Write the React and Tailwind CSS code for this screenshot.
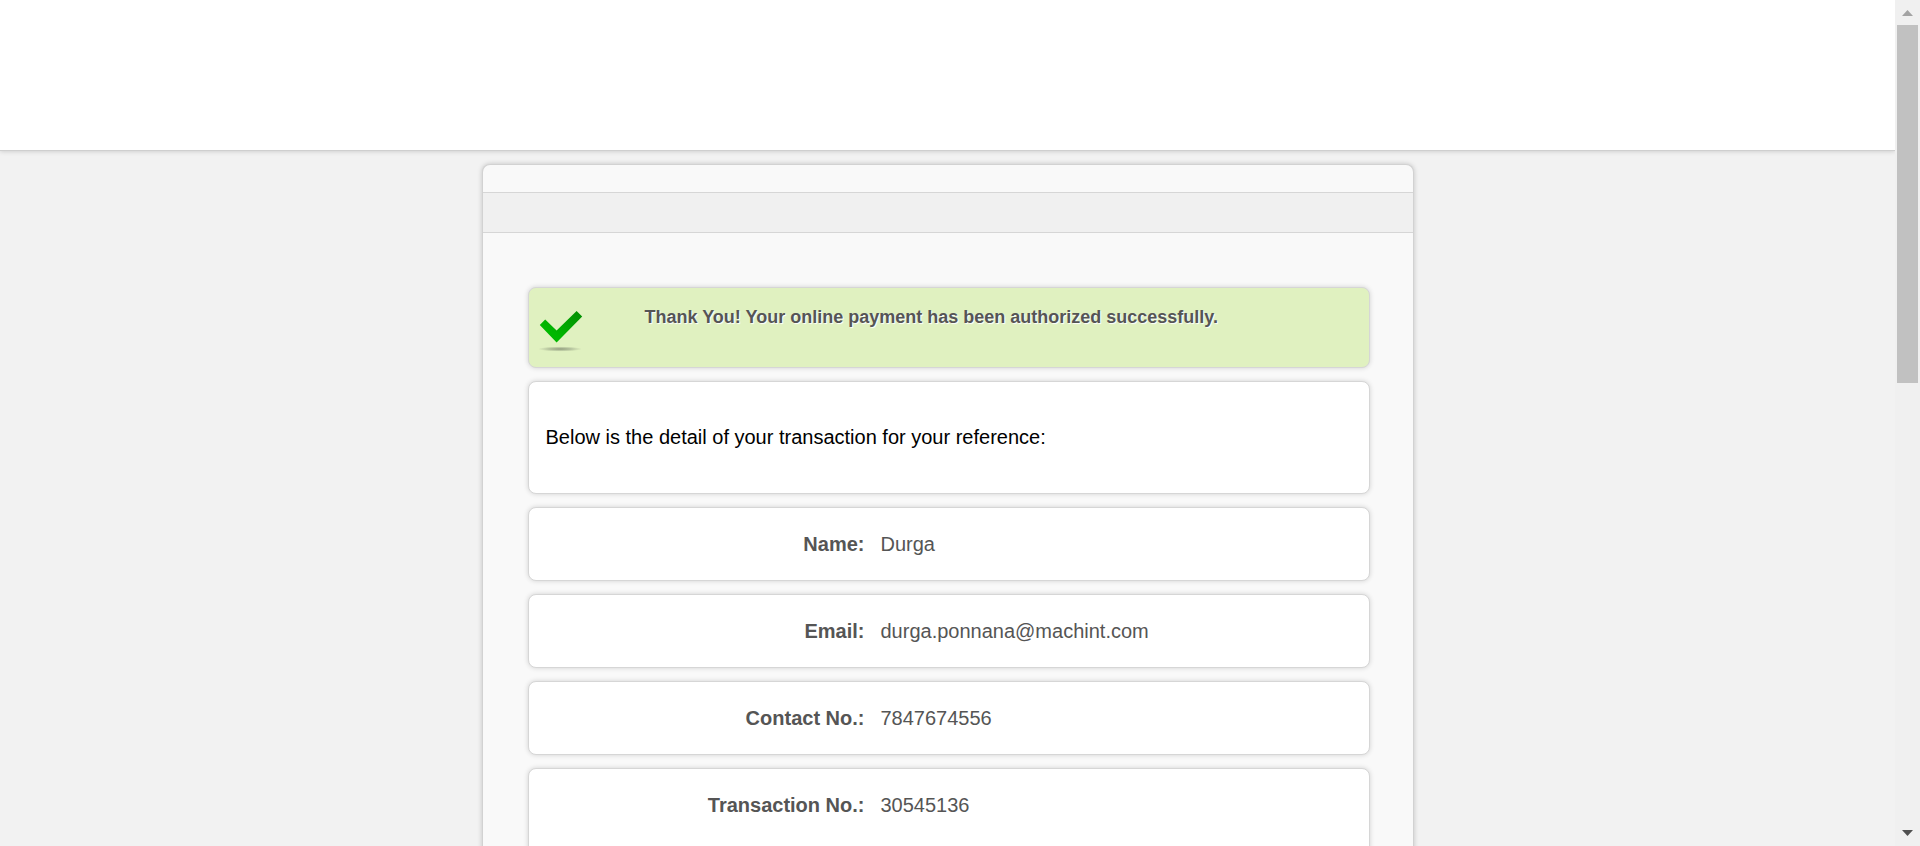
const details = [
  ['Name:', 'Durga'],
  ['Email:', 'durga.ponnana@machint.com'],
  ['Contact No.:', '7847674556'],
  ['Transaction No.:', '30545136'],
];

const panel =
  'rounded-lg border border-[#d6d6d6] shadow-[0_0_5px_rgba(0,0,0,0.16)]';

function SuccessIcon() {
  return (
    <svg viewBox="0 0 44 42" className="h-[42px] w-11 shrink-0" aria-hidden="true">
      <defs>
        <linearGradient id="tick" x1="0" y1="1" x2="1" y2="0">
          <stop offset="0.3" stopColor="#00b800" />
          <stop offset="1" stopColor="#048c04" />
        </linearGradient>
        <radialGradient id="ground">
          <stop offset="0" stopColor="#7c866a" stopOpacity="0.8" />
          <stop offset="0.5" stopColor="#89947a" stopOpacity="0.5" />
          <stop offset="1" stopColor="#8f9a7c" stopOpacity="0" />
        </radialGradient>
      </defs>
      <ellipse cx="21" cy="38" rx="22" ry="2.6" fill="url(#ground)" />
      <path d="M.8 14 6.2 8.6 17.6 19.6 37.6 0 43.2 5.6 17.6 31.6Z" fill="url(#tick)" />
    </svg>
  );
}

function ScrollTrack() {
  return (
    <div className="flex w-[25px] shrink-0 flex-col items-center bg-[#f0f0f0]" aria-hidden="true">
      <div className="flex h-[25px] w-full shrink-0 items-center justify-center">
        <svg viewBox="0 0 11 6" className="h-1.5 w-[11px]">
          <path d="M0 6 5.5 0 11 6Z" fill="#a3a3a3" />
        </svg>
      </div>
      <div className="flex w-full flex-1 flex-col px-0.5">
        <div className="h-[45%] bg-[#c1c1c1]" />
      </div>
      <div className="flex h-[26px] w-full shrink-0 items-center justify-center">
        <svg viewBox="0 0 11 6" className="h-1.5 w-[11px]">
          <path d="M0 0h11L5.5 6Z" fill="#505050" />
        </svg>
      </div>
    </div>
  );
}

export default function App() {
  return (
    <div className="flex h-screen overflow-hidden bg-[#f2f2f2] font-['Liberation_Sans',Arial,sans-serif] text-[#555]">
      <div className="min-w-0 flex-1 overflow-hidden">
        <header className="h-[151px] border-b border-[#cfcfcf] bg-white shadow-[0_0_5px_rgba(0,0,0,0.2)]" />
        <main className="mx-auto mt-[13px] w-full max-w-[932px] rounded-t-lg border border-b-0 border-[#d2d2d2] bg-[#f9f9f9] shadow-[0_0_5px_rgba(0,0,0,0.2)]">
          <div className="mt-[27px] h-[41px] border-y border-[#d6d6d6] bg-[#f0f0f0]" />
          <div className="flex flex-col gap-[13px] pt-[54px] pr-[43px] pb-12 pl-[45px]">
            <section className={`${panel} flex h-[81px] items-start bg-[#e0f1c0] pl-2.5`}>
              <div className="pt-[23px]">
                <SuccessIcon />
              </div>
              <h1 className="pt-[17px] pl-[62px] text-lg leading-6 font-bold [text-shadow:1px_1px_1px_#fff]">
                Thank You! Your online payment has been authorized successfully.
              </h1>
            </section>
            <section className={`${panel} bg-white px-[17px] py-11`}>
              <p className="text-xl leading-[23px] text-black">
                Below is the detail of your transaction for your reference:
              </p>
            </section>
            <dl className="flex flex-col gap-[13px] text-xl leading-6">
              {details.map(([label, value]) => (
                <div key={label} className={`${panel} grid grid-cols-[2fr_3fr] bg-white py-6 last:pb-12`}>
                  <dt className="text-right font-bold">{label}</dt>
                  <dd className="pl-4">{value}</dd>
                </div>
              ))}
            </dl>
          </div>
        </main>
      </div>
      <ScrollTrack />
    </div>
  );
}
